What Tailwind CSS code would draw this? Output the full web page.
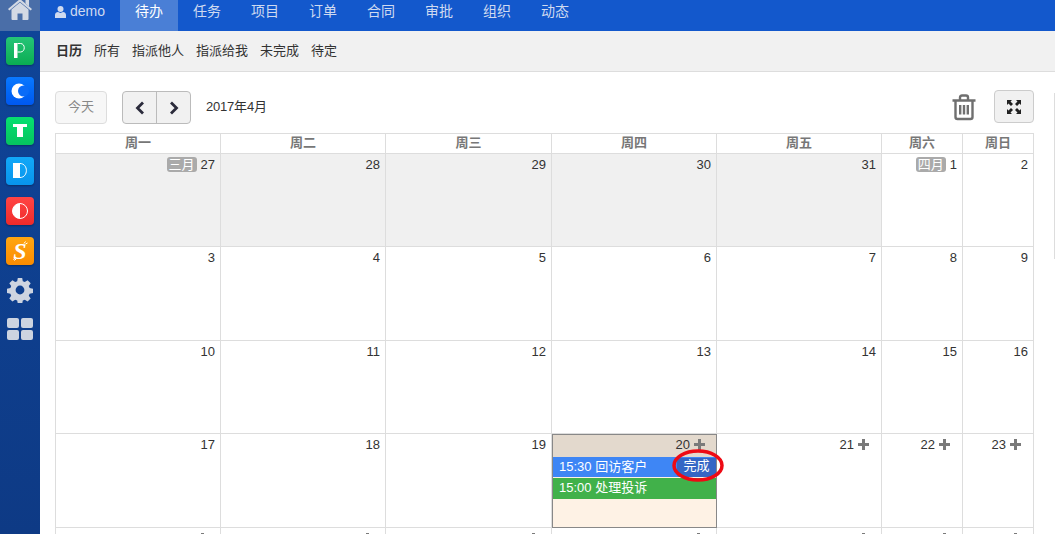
<!DOCTYPE html>
<html lang="en">

<head>
    <meta charset="UTF-8">
    <meta name="viewport" content="width=device-width, initial-scale=1.0">
    <title>日历</title>
    <script src="https://cdn.jsdelivr.net/npm/@tailwindcss/browser@4"></script>
</head>

<body class="relative h-[534px] w-[1055px] overflow-hidden bg-white flex text-[13px] text-[#333] font-['Liberation_Sans','Noto_Sans_CJK_SC',sans-serif]">
    <!-- sidebar -->
    <aside class="w-10 h-full shrink-0 flex flex-col items-center bg-gradient-to-b from-[#0f4599] to-[#0e3a85]">
        <div class="w-10 h-[31px] bg-[#4a6ea8] flex justify-center overflow-hidden">
            <svg class="w-[26px] h-[24px] -mt-[3px] shrink-0" viewBox="0 0 26 24" fill="#d3d9e4">
                <path d="M13 5.500 4.500 12.600V22a1 1 0 0 0 1 1H10.500V16.500h5V23H20.500a1 1 0 0 0 1-1V12.600Z" />
                <path d="M13 2 25 12l-1.300 1.600L13 4.800 2.300 13.600 1 12 9 5.300Z" />
                <path d="M18.500 3H22v6.500l-3.500-3Z" />
            </svg>
        </div>
        <div class="mt-[6px] flex flex-col gap-3 items-center">
            <div class="w-7 h-7 rounded bg-gradient-to-b from-[#24c477] to-[#09ad52] shadow-[0_1px_2px_rgba(0,0,0,0.3)]">
                <svg class="w-7 h-7" viewBox="0 0 28 28"><path d="M8 6h3.500v15H8Z" fill="#fff" /><path d="M11.500 6.500h3c5 0 5 8.500 0 8.500h-3" fill="none" stroke="#fff" /></svg>
            </div>
            <div class="w-7 h-7 rounded bg-gradient-to-b from-[#0a78ff] to-[#0058f0] shadow-[0_1px_2px_rgba(0,0,0,0.3)]">
                <svg class="w-7 h-7" viewBox="0 0 28 28"><circle cx="13" cy="14" r="7.500" fill="#fff" /><circle cx="17.500" cy="14" r="5.500" fill="#0a6cf8" /></svg>
            </div>
            <div class="w-7 h-7 rounded bg-gradient-to-b from-[#07e070] to-[#06c45f] shadow-[0_1px_2px_rgba(0,0,0,0.3)]">
                <svg class="w-7 h-7" viewBox="0 0 28 28"><path d="M7 7h14v3h-4v10h-6V10H7Z" fill="#fff" /></svg>
            </div>
            <div class="w-7 h-7 rounded bg-gradient-to-b from-[#12a8f8] to-[#0894ec] shadow-[0_1px_2px_rgba(0,0,0,0.3)]">
                <svg class="w-7 h-7" viewBox="0 0 28 28"><path d="M7 6h7v15H7Z" fill="#fff" /><path d="M14 6.500c8.500 0 8.500 14 0 14" fill="none" stroke="#fff" /></svg>
            </div>
            <div class="w-7 h-7 rounded bg-gradient-to-b from-[#ff4444] to-[#f02a2a] shadow-[0_1px_2px_rgba(0,0,0,0.3)]">
                <svg class="w-7 h-7" viewBox="0 0 28 28"><circle cx="14" cy="14" r="7.500" fill="none" stroke="#fff" /><path d="M14 6.500a7.500 7.500 0 0 0 0 15Z" fill="#fff" /></svg>
            </div>
            <div class="relative w-7 h-7 rounded bg-gradient-to-b from-[#ffa612] to-[#fb8c00] shadow-[0_1px_2px_rgba(0,0,0,0.3)] flex items-center justify-center text-white font-bold italic text-[24px] leading-none font-['Liberation_Serif',serif]">
                S
                <svg class="absolute inset-0 w-7 h-7" viewBox="0 0 28 28" stroke="#fff"><path d="M18 6.500l1.500-2M19.500 7l2-1M9 21l-1.500 2M10 22l-1.500 1.500" /></svg>
            </div>
        </div>
        <svg class="w-[26px] h-[26px] mt-[12px]" viewBox="0 0 26 26" fill="#cdd4e0">
            <path fill-rule="evenodd" d="M10.800 1h4.400l.6 3.300 2 .8 2.800-1.900 3.100 3.100-1.900 2.800.8 2 3.400.6v4.400l-3.400.6-.8 2 1.900 2.800-3.100 3.100-2.800-1.900-2 .8-.6 3.300h-4.400l-.6-3.300-2-.8-2.800 1.900-3.100-3.100 1.900-2.800-.8-2-3.400-.6v-4.400l3.400-.6.8-2-1.900-2.800 3.100-3.100 2.800 1.900 2-.8ZM13 8.600a4.400 4.400 0 1 0 0 8.800 4.400 4.400 0 0 0 0-8.800Z" />
        </svg>
        <div class="mt-[15px] grid grid-cols-2 gap-[2px] w-[26px]">
            <div class="h-[10px] rounded-[2px] bg-[#cdd4e0]"></div>
            <div class="h-[10px] rounded-[2px] bg-[#cdd4e0]"></div>
            <div class="h-[10px] rounded-[2px] bg-[#cdd4e0]"></div>
            <div class="h-[10px] rounded-[2px] bg-[#cdd4e0]"></div>
        </div>
    </aside>

    <main class="flex-1 min-w-0 flex flex-col">
        <!-- top nav -->
        <nav class="h-[31px] shrink-0 bg-[#1358cc] flex text-[14px] text-[#cfdaf0] leading-[23px]">
            <a class="w-[80px] pl-[15px] pb-[8px] flex items-center gap-1">
                <svg class="w-[11px] h-[12px]" viewBox="0 0 11 12" fill="#cfdaf0"><circle cx="5.500" cy="3" r="3" /><path d="M0 12V9c0-2 1.500-3 3-3l2.500 1L8 6c1.500 0 3 1 3 3v3Z" /></svg>
                demo
            </a>
            <a class="w-[58px] pb-[8px] bg-[#4a7fd6] text-white flex items-center justify-center">待办</a>
            <a class="w-[58px] pb-[8px] flex items-center justify-center">任务</a>
            <a class="w-[58px] pb-[8px] flex items-center justify-center">项目</a>
            <a class="w-[58px] pb-[8px] flex items-center justify-center">订单</a>
            <a class="w-[58px] pb-[8px] flex items-center justify-center">合同</a>
            <a class="w-[58px] pb-[8px] flex items-center justify-center">审批</a>
            <a class="w-[58px] pb-[8px] flex items-center justify-center">组织</a>
            <a class="w-[58px] pb-[8px] flex items-center justify-center">动态</a>
        </nav>
        <!-- sub nav -->
        <div class="h-[41px] shrink-0 bg-[#f1f1f1] border-b border-[#ddd] pl-[16px] pb-[1px] flex items-center gap-3 text-[13px]">
            <a class="font-bold">日历</a>
            <a>所有</a>
            <a>指派他人</a>
            <a>指派给我</a>
            <a>未完成</a>
            <a>待定</a>
        </div>
        <!-- toolbar -->
        <div class="h-[61px] shrink-0 pl-[15px] pr-[21px] pt-[19px] flex items-start">
            <button class="w-[52px] h-[33px] pb-[1px] border border-[#ddd] rounded bg-[#f7f7f7] text-[#888]">今天</button>
            <div class="ml-[15px] h-[33px] w-[69px] flex border border-[#bbb] rounded bg-[#f1f1f1]">
                <button class="w-[34px] border-r border-[#bbb] flex items-center justify-center">
                    <svg class="w-[10px] h-[14px]" viewBox="0 0 10 14" fill="none" stroke="#2b2b3b" stroke-width="2.800"><path d="M8 1.500 2.500 7 8 12.500" /></svg>
                </button>
                <button class="flex-1 flex items-center justify-center">
                    <svg class="w-[10px] h-[14px]" viewBox="0 0 10 14" fill="none" stroke="#2b2b3b" stroke-width="2.800"><path d="M2 1.500 7.500 7 2 12.500" /></svg>
                </button>
            </div>
            <div class="ml-[15px] h-[31px] flex items-center text-[13px] tracking-[-0.2px]">2017年4月</div>
            <svg class="ml-auto mt-[3px] w-[24px] h-[27px]" viewBox="0 0 24 27" fill="none" stroke="#6f6f6f" stroke-width="2.400">
                <path d="M0.500 6.500h23M8 6V3.500C8 2 9 1.500 10 1.500h4c1 0 2 .5 2 2V6M3.500 6v17c0 1.200.8 2 2 2h13c1.200 0 2-.8 2-2V6" />
                <path d="M8.200 11v9.500M12 11v9.500M15.800 11v9.500" />
            </svg>
            <button class="ml-[18px] -mt-[1px] w-[40px] h-[33px] border border-[#ccc] rounded bg-[#f1f1f1] flex items-center justify-center">
                <svg class="w-[14px] h-[14px]" viewBox="0 0 14 14" fill="#222">
                    <path d="M0 0h5L3.500 1.500 6 4 4 6 1.500 3.500 0 5ZM14 0v5l-1.500-1.500L10 6 8 4l2.500-2.500L9 0ZM0 14V9l1.500 1.500L4 8l2 2-2.500 2.500L5 14ZM14 14H9l1.500-1.500L8 10l2-2 2.500 2.500L14 9Z" />
                </svg>
            </button>
        </div>
        <!-- calendar -->
        <div class="ml-[15px] w-[979px] border-l border-t border-[#ddd]">
            <div class="grid grid-cols-[165px_165px_166px_165px_165px_81px_71px] h-[20px] text-[13px] font-bold text-[#777] text-center leading-[18px]">
                <div class="border-r border-b border-[#ddd]">周一</div>
                <div class="border-r border-b border-[#ddd]">周二</div>
                <div class="border-r border-b border-[#ddd]">周三</div>
                <div class="border-r border-b border-[#ddd]">周四</div>
                <div class="border-r border-b border-[#ddd]">周五</div>
                <div class="border-r border-b border-[#ddd]">周六</div>
                <div class="border-r border-b border-[#ddd]">周日</div>
            </div>
            <div class="grid grid-cols-[165px_165px_166px_165px_165px_81px_71px] grid-rows-[93px_94px_93px_94px_93px] text-[13px] text-right leading-[14px]">
                <div class="border-r border-b border-[#ddd] bg-[#f0f0f0] pt-[4px] pr-[5px]"><span class="bg-[#aaa] text-white rounded-[3px] px-[2px] mr-[4px]">三月</span>27</div>
                <div class="border-r border-b border-[#ddd] bg-[#f0f0f0] pt-[4px] pr-[5px]">28</div>
                <div class="border-r border-b border-[#ddd] bg-[#f0f0f0] pt-[4px] pr-[5px]">29</div>
                <div class="border-r border-b border-[#ddd] bg-[#f0f0f0] pt-[4px] pr-[5px]">30</div>
                <div class="border-r border-b border-[#ddd] bg-[#f0f0f0] pt-[4px] pr-[5px]">31</div>
                <div class="border-r border-b border-[#ddd] pt-[4px] pr-[5px]"><span class="bg-[#aaa] text-white rounded-[3px] px-[2px] mr-[4px]">四月</span>1</div>
                <div class="border-r border-b border-[#ddd] pt-[4px] pr-[5px]">2</div>

                <div class="border-r border-b border-[#ddd] pt-[4px] pr-[5px]">3</div>
                <div class="border-r border-b border-[#ddd] pt-[4px] pr-[5px]">4</div>
                <div class="border-r border-b border-[#ddd] pt-[4px] pr-[5px]">5</div>
                <div class="border-r border-b border-[#ddd] pt-[4px] pr-[5px]">6</div>
                <div class="border-r border-b border-[#ddd] pt-[4px] pr-[5px]">7</div>
                <div class="border-r border-b border-[#ddd] pt-[4px] pr-[5px]">8</div>
                <div class="border-r border-b border-[#ddd] pt-[4px] pr-[5px]">9</div>

                <div class="border-r border-b border-[#ddd] pt-[4px] pr-[5px]">10</div>
                <div class="border-r border-b border-[#ddd] pt-[4px] pr-[5px]">11</div>
                <div class="border-r border-b border-[#ddd] pt-[4px] pr-[5px]">12</div>
                <div class="border-r border-b border-[#ddd] pt-[4px] pr-[5px]">13</div>
                <div class="border-r border-b border-[#ddd] pt-[4px] pr-[5px]">14</div>
                <div class="border-r border-b border-[#ddd] pt-[4px] pr-[5px]">15</div>
                <div class="border-r border-b border-[#ddd] pt-[4px] pr-[5px]">16</div>

                <div class="border-r border-b border-[#ddd] pt-[4px] pr-[5px]">17</div>
                <div class="border-r border-b border-[#ddd] pt-[4px] pr-[5px]">18</div>
                <div class="border-r border-b border-[#ddd] pt-[4px] pr-[5px]">19</div>
                <!-- today -->
                <div class="relative border border-[#888] bg-[#fef2e5] flex flex-col">
                    <div class="h-[22px] bg-[#e3d9cd] pt-[3px] pr-[11px] flex justify-end items-start gap-[4px]">20
                        <svg class="w-[11px] h-[11px] mt-[1px]" viewBox="0 0 11 11" fill="#7a7a7a"><path d="M4 0h3v4h4v3H7v4H4V7H0V4h4Z" /></svg>
                    </div>
                    <div class="h-[20px] bg-[#3e86f5] text-white text-left pl-[6px] leading-[20px] flex justify-between">15:30 回访客户
                        <span class="w-[39px] h-[19px] mt-[1px] rounded-l-[3px] bg-[#3566c5] text-center leading-[16px]">完成</span>
                    </div>
                    <div class="h-[21px] mt-[1px] bg-[#41b14a] text-white text-left pl-[6px] leading-[20px]">15:00 处理投诉</div>
                    <svg class="absolute left-[119px] top-[14px] w-[52px] h-[33px]" viewBox="0 0 52 33" fill="none" stroke="#ee0a14" stroke-width="3.500"><ellipse cx="26" cy="16.500" rx="24" ry="14.500" /></svg>
                </div>
                <div class="border-r border-b border-[#ddd] pt-[4px] pr-[12px] flex justify-end items-start gap-[4px]">21
                    <svg class="w-[11px] h-[11px] mt-[1px]" viewBox="0 0 11 11" fill="#7a7a7a"><path d="M4 0h3v4h4v3H7v4H4V7H0V4h4Z" /></svg>
                </div>
                <div class="border-r border-b border-[#ddd] pt-[4px] pr-[12px] flex justify-end items-start gap-[4px]">22
                    <svg class="w-[11px] h-[11px] mt-[1px]" viewBox="0 0 11 11" fill="#7a7a7a"><path d="M4 0h3v4h4v3H7v4H4V7H0V4h4Z" /></svg>
                </div>
                <div class="border-r border-b border-[#ddd] pt-[4px] pr-[12px] flex justify-end items-start gap-[4px]">23
                    <svg class="w-[11px] h-[11px] mt-[1px]" viewBox="0 0 11 11" fill="#7a7a7a"><path d="M4 0h3v4h4v3H7v4H4V7H0V4h4Z" /></svg>
                </div>

                <!-- next row only peeks in at the bottom edge -->
                <div class="border-r border-[#ddd] pt-[5px] pr-[12px] flex justify-end items-start"><svg class="w-[11px] h-[11px]" viewBox="0 0 11 11" fill="#7a7a7a"><path d="M4 0h3v4h4v3H7v4H4V7H0V4h4Z" /></svg></div>
                <div class="border-r border-[#ddd] pt-[5px] pr-[12px] flex justify-end items-start"><svg class="w-[11px] h-[11px]" viewBox="0 0 11 11" fill="#7a7a7a"><path d="M4 0h3v4h4v3H7v4H4V7H0V4h4Z" /></svg></div>
                <div class="border-r border-[#ddd] pt-[5px] pr-[12px] flex justify-end items-start"><svg class="w-[11px] h-[11px]" viewBox="0 0 11 11" fill="#7a7a7a"><path d="M4 0h3v4h4v3H7v4H4V7H0V4h4Z" /></svg></div>
                <div class="border-r border-[#ddd] pt-[5px] pr-[12px] flex justify-end items-start"><svg class="w-[11px] h-[11px]" viewBox="0 0 11 11" fill="#7a7a7a"><path d="M4 0h3v4h4v3H7v4H4V7H0V4h4Z" /></svg></div>
                <div class="border-r border-[#ddd] pt-[5px] pr-[12px] flex justify-end items-start"><svg class="w-[11px] h-[11px]" viewBox="0 0 11 11" fill="#7a7a7a"><path d="M4 0h3v4h4v3H7v4H4V7H0V4h4Z" /></svg></div>
                <div class="border-r border-[#ddd] pt-[5px] pr-[12px] flex justify-end items-start"><svg class="w-[11px] h-[11px]" viewBox="0 0 11 11" fill="#7a7a7a"><path d="M4 0h3v4h4v3H7v4H4V7H0V4h4Z" /></svg></div>
                <div class="border-r border-[#ddd] pt-[5px] pr-[12px] flex justify-end items-start"><svg class="w-[11px] h-[11px]" viewBox="0 0 11 11" fill="#7a7a7a"><path d="M4 0h3v4h4v3H7v4H4V7H0V4h4Z" /></svg></div>
            </div>
        </div>
    </main>
    <!-- edge of a panel off to the right -->
    <div class="absolute left-[1054px] top-[93px] w-px h-[166px] bg-[#ddd]"></div>
</body>

</html>
